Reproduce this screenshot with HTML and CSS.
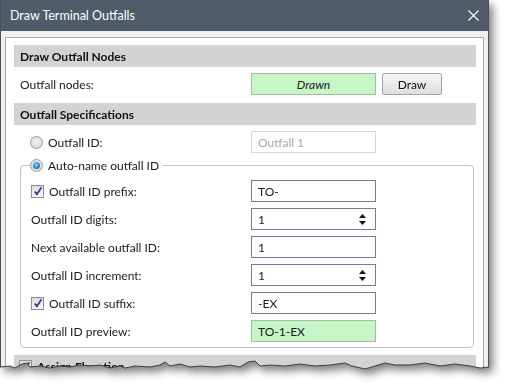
FILE: index.html
```html
<!DOCTYPE html>
<html>
<head>
<meta charset="utf-8">
<link rel="stylesheet" href="styles.css">
</head>
<body>
<div class="stage">
  <div class="shadow">
    <div class="window">
      <div class="titlebar">
        <span class="title">Draw Terminal Outfalls</span>
        <svg class="close" width="11" height="11" viewBox="0 0 11 11"><path d="M0.5 0.5 L10.5 10.5 M10.5 0.5 L0.5 10.5" stroke="#fff" stroke-width="1.1"/></svg>
      </div>
      <div class="content">
        <div class="panel">
          <div class="band">Draw Outfall Nodes</div>
          <div class="row top">
            <span class="label">Outfall nodes:</span>
            <div class="field green italic center">Drawn</div>
            <button class="btn">Draw</button>
          </div>
          <div class="band">Outfall Specifications</div>
          <div class="row top">
            <span class="label radiolabel"><span class="radio"></span>Outfall ID:</span>
            <div class="field disabled">Outfall 1</div>
          </div>
          <fieldset class="group">
            <legend class="legend"><span class="radio checked"></span>Auto-name outfall ID</legend>
            <div class="row">
              <span class="label"><span class="check"><svg width="10" height="10" viewBox="0 0 10 10"><path d="M1.8 5.4 L3.9 8.2 L8.4 1.4" fill="none" stroke="#2b2f86" stroke-width="1.7"/></svg></span>Outfall ID prefix:</span>
              <div class="field">TO-</div>
            </div>
            <div class="row">
              <span class="label">Outfall ID digits:</span>
              <div class="field spin">1<svg class="arrows" width="7" height="11" viewBox="0 0 7 11"><path d="M3.5 0 L7 4 L0 4 Z M0 7 L7 7 L3.5 11 Z" fill="#111"/></svg></div>
            </div>
            <div class="row">
              <span class="label">Next available outfall ID:</span>
              <div class="field">1</div>
            </div>
            <div class="row">
              <span class="label">Outfall ID increment:</span>
              <div class="field spin">1<svg class="arrows" width="7" height="11" viewBox="0 0 7 11"><path d="M3.5 0 L7 4 L0 4 Z M0 7 L7 7 L3.5 11 Z" fill="#111"/></svg></div>
            </div>
            <div class="row">
              <span class="label"><span class="check"><svg width="10" height="10" viewBox="0 0 10 10"><path d="M1.8 5.4 L3.9 8.2 L8.4 1.4" fill="none" stroke="#2b2f86" stroke-width="1.7"/></svg></span>Outfall ID suffix:</span>
              <div class="field">-EX</div>
            </div>
            <div class="row">
              <span class="label">Outfall ID preview:</span>
              <div class="field green">TO-1-EX</div>
            </div>
          </fieldset>
          <div class="band band3"><span class="check"><svg width="10" height="10" viewBox="0 0 10 10"><path d="M1.8 5.4 L3.9 8.2 L8.4 1.4" fill="none" stroke="#2b2f86" stroke-width="1.7"/></svg></span>Assign Elevation</div>
        </div>
      </div>
    </div>
  </div>
  <svg class="edge" width="505" height="383" viewBox="0 0 505 383">
    <polyline fill="none" stroke="#3a3a3a" stroke-width="1" points="0,367 10,366 15,368 22,364 27,363 30,367 40,366 50,368 60,366 70,367 80,365 90,366 100,365 110,368 120,366 125,368 135,366 150,367 160,365 165,362 170,366 180,364 190,367 200,366 215,367 230,365 240,367 248,362 255,361 260,366 270,365 285,366 300,364 315,366 330,365 345,363 352,366 365,369 375,366 385,363 395,365 410,365 425,363 440,366 455,364 470,366 480,368 489,367"/>
  </svg>
</div>
</body>
</html>
```

FILE: styles.css
```css
* { box-sizing: border-box; }
html, body { margin: 0; padding: 0; background: #fff; }
body {
  font-family: "Lato", "Noto Sans", sans-serif;
  font-size: 12px;
  color: #1a1a1a;
}
.stage { position: relative; width: 505px; height: 383px; overflow: hidden; }
.shadow { filter: drop-shadow(4px 5px 4px rgba(0,0,0,0.5)); width: 489px; }
.window {
  width: 489px;
  height: 383px;
  background: #f0f0f0;
  border-left: 1px solid #4f4f4f;
  border-right: 1px solid #4f4f4f;
  clip-path: polygon(0 0, 489px 0, 489px 367px, 480px 368px, 470px 366px, 455px 364px, 440px 366px, 425px 363px, 410px 365px, 395px 365px, 385px 363px, 375px 366px, 365px 369px, 352px 366px, 345px 363px, 330px 365px, 315px 366px, 300px 364px, 285px 366px, 270px 365px, 260px 366px, 255px 361px, 248px 362px, 240px 367px, 230px 365px, 215px 367px, 200px 366px, 190px 367px, 180px 364px, 170px 366px, 165px 362px, 160px 365px, 150px 367px, 135px 366px, 125px 368px, 120px 366px, 110px 368px, 100px 365px, 90px 366px, 80px 365px, 70px 367px, 60px 366px, 50px 368px, 40px 366px, 30px 367px, 27px 363px, 22px 364px, 15px 368px, 10px 366px, 0 367px);
}
.edge { position: absolute; left: 0; top: 0; }
.titlebar {
  height: 31px;
  background: #4f5b69;
  display: flex;
  align-items: center;
  justify-content: space-between;
  padding: 0 9px 1px 9px;
  color: #fff;
}
.title { font-size: 12.5px; }
.close { margin-top: 1px; }
.content { padding: 6px 4px 0 4px; }
.panel {
  background: #fff;
  border: 1px solid #a8a8a8;
  border-bottom: none;
  padding: 7px 7px 20px 8px;
}
.band {
  height: 22px;
  background: #d3d3d3;
  display: flex;
  align-items: center;
  padding-left: 6px;
  font-weight: 700;
  color: #111;
}
.band + .row { margin-top: 6px; }
.row { display: flex; align-items: center; height: 22px; }
.row + .band { margin-top: 8px; }
.row.top { padding-left: 6px; }
.label { width: 231px; flex: none; display: flex; align-items: center; }
.radiolabel { padding-left: 10px; }
.field {
  width: 125px;
  height: 22px;
  border: 1px solid #7b7799;
  display: flex;
  align-items: center;
  padding: 0 6px;
  position: relative;
}
.field.green { background: #c6f5c6; border-color: #a6b8a6; }
.field.center { justify-content: center; }
.field.italic { font-style: italic; }
.field.disabled { border-color: #d8d8d8; color: #a6a6a6; }
.spin .arrows { position: absolute; right: 9px; top: 5px; }
.btn {
  margin-left: 6px;
  width: 60px;
  height: 22px;
  border: 1px solid #a3a3a3;
  border-radius: 2px;
  background: linear-gradient(#f4f4f4, #dedede);
  font-family: inherit;
  font-size: 12px;
  color: #111;
  padding: 0;
}
.radio {
  width: 13px; height: 13px;
  border-radius: 50%;
  border: 1px solid #9a9a9a;
  background: radial-gradient(circle at 50% 40%, #f4f4f4, #cfcfcf);
  margin-right: 5px;
  flex: none;
  position: relative;
  display: inline-block;
}
.radio.checked::after {
  content: "";
  position: absolute;
  left: 2px; top: 2px;
  width: 7px; height: 7px;
  border-radius: 50%;
  background: radial-gradient(circle at 45% 40%, #8fd2f8, #1e76b8 70%, #13508a);
}
.check {
  width: 13px; height: 13px;
  border: 1px solid #8e8e8e;
  background: linear-gradient(#dcdcdc, #f8f8f8);
  display: inline-flex;
  align-items: center;
  justify-content: center;
  margin-right: 5px;
  flex: none;
}
.group {
  margin: 4px 2px 0 6px;
  border: 1px solid #c4c4c4;
  border-radius: 4px;
  padding: 0 0 5px 10px;
  min-width: 0;
}
.legend {
  padding: 0 4px 0 0;
  margin-left: -1px;
  height: 16px;
  display: flex;
  align-items: center;
  background: #fff;
}
.group .row { margin-top: 6px; }
.group .row:first-of-type { margin-top: 7px; }
.group .label { width: 220px; }
.band3 { margin-top: 7px; padding-left: 5px; }
```
